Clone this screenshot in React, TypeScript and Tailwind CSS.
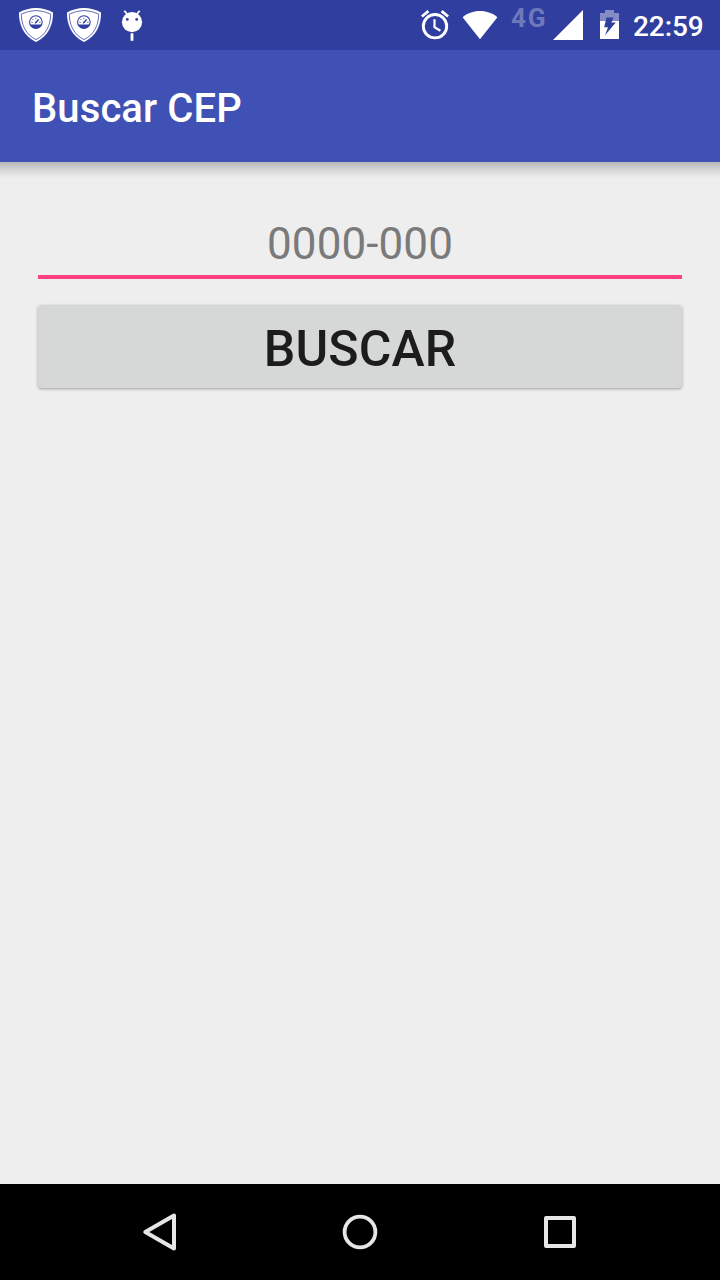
import React from "react";

function ShieldIcon() {
  return (
    <svg className="h-[50px] w-12 shrink-0" viewBox="12 0 48 50" fill="none">
      <path d="M36 8Q45 8 53 12.6C53.4 24 48.5 36.5 36 42C23.5 36.5 18.6 24 19 12.6Q27 8 36 8Z" fill="#fff" />
      <path d="M36 10.5Q44 10.6 50.7 14.2C50.6 24.5 46.5 34.6 36 39.6C25.5 34.6 21.4 24.5 21.3 14.2Q28 10.6 36 10.5Z" stroke="#4d5bb0" strokeWidth="0.9" />
      <circle cx="35.900" cy="22" r="6.300" stroke="#303F9F" strokeWidth="1.100" />
      <path d="M30 24.600H41.800C40.900 27.800 38.600 28.800 35.900 28.800S30.900 27.800 30 24.600Z" fill="#303F9F" />
      <path d="M35.200 23.200L38.600 19.600" stroke="#303F9F" strokeWidth="1.500" />
      <path d="M31.500 22.300H32.700M32.600 19.200L33.400 20M35.800 17.800V18.900M39.200 22.300H40.400" stroke="#303F9F" strokeWidth="0.900" />
    </svg>
  );
}

function BugdroidIcon() {
  return (
    <svg className="h-[50px] w-12 shrink-0" viewBox="108 0 48 50">
      <circle cx="132" cy="22.200" r="10.100" fill="#fff" />
      <path d="M124.300 10.700L127.600 14.800M139.700 10.700L136.400 14.800" stroke="#fff" strokeWidth="1.800" />
      <path d="M130.600 33.300H133.400V40.800H130.600Z" fill="#fff" />
      <circle cx="127.300" cy="19.400" r="1.400" fill="#303F9F" />
      <circle cx="136.700" cy="19.400" r="1.400" fill="#303F9F" />
    </svg>
  );
}

function AlarmIcon() {
  return (
    <svg className="h-[50px] w-10 shrink-0" viewBox="415 0 40 50" fill="none" stroke="#fff">
      <circle cx="435" cy="26.200" r="11.700" strokeWidth="2.900" />
      <path d="M421.900 16.500L428.400 11.100M448.100 16.500L441.600 11.100" strokeWidth="2.800" />
      <path d="M434.500 19.300V27.200L440.400 30.800" strokeWidth="2.200" />
    </svg>
  );
}

function WifiIcon() {
  return (
    <svg className="h-[50px] w-[50px] shrink-0" viewBox="455 0 50 50" fill="#fff">
      <path d="M480 39.200L462.600 17.200C467.300 13.300 473 11 480 11S492.700 13.300 497.400 17.200Z" />
    </svg>
  );
}

function CellAndBattery() {
  return (
    <svg className="h-[50px] w-[80px] shrink-0" viewBox="550 0 80 50">
      <path d="M583 10V40H553Z" fill="#fff" />
      <path d="M600 21V13H605V10H614V13H619V21Z" fill="#838cc5" />
      <path d="M600 21H619V39H600Z" fill="#fff" />
      <path d="M606.500 17.400H613.600L611.400 22.600H615.800L605 35.200L608 27.200H604.200Z" fill="#303F9F" />
    </svg>
  );
}

function StatusBar() {
  return (
    <header className="flex h-[50px] items-center bg-[#303F9F] pl-3 text-white">
      <ShieldIcon />
      <ShieldIcon />
      <BugdroidIcon />
      <div className="ml-auto flex h-full items-center">
        <AlarmIcon />
        <WifiIcon />
        <span className="w-[45px] shrink-0 pb-[13px] pl-[6px] text-[25px] leading-none font-bold tracking-[1.5px] text-[#6e79bb]">
          <span className="inline-block origin-left scale-x-105">4G</span>
        </span>
        <CellAndBattery />
        <span className="w-[90px] shrink-0 pt-[3px] pl-[3px] text-[28px] leading-none font-medium tracking-[-0.1px]">22:59</span>
      </div>
    </header>
  );
}

function NavigationBar() {
  return (
    <nav className="flex h-24 items-center justify-center gap-[104px] bg-black">
      <button aria-label="Voltar" className="size-24">
        <svg className="size-24" viewBox="112 1184 96 96" fill="none">
          <path d="M174 1215.500V1248.500L145.300 1232Z" stroke="#e6e6e6" strokeWidth="4" strokeLinejoin="round" />
        </svg>
      </button>
      <button aria-label="Início" className="size-24">
        <svg className="size-24" viewBox="312 1184 96 96" fill="none">
          <circle cx="360" cy="1232" r="15.400" stroke="#e6e6e6" strokeWidth="3.800" />
        </svg>
      </button>
      <button aria-label="Recentes" className="size-24">
        <svg className="size-24" viewBox="512 1184 96 96" fill="none">
          <rect x="546" y="1218" width="28" height="28" stroke="#e6e6e6" strokeWidth="4" strokeLinejoin="round" />
        </svg>
      </button>
    </nav>
  );
}

export default function App() {
  return (
    <div className="flex h-[1280px] w-[720px] flex-col overflow-hidden bg-[#eeeeee] font-[Roboto,sans-serif]">
      <StatusBar />
      <div className="flex h-28 items-center bg-[#3F51B5] pt-1.5 pl-8">
        <h1 className="text-[40px] leading-none font-medium tracking-[0.1px] text-white">Buscar CEP</h1>
      </div>
      <div className="h-4 bg-linear-to-b from-[#bcbcbc] from-10% via-[#d6d6d6] to-[#eeeeee]" />
      <main className="flex flex-1 flex-col px-[38px] pt-[38px]">
        <input
          placeholder="0000-000"
          className="h-[63px] border-b-4 border-[#FF4081] bg-transparent pt-[1px] pb-1 text-center text-[44px] leading-none tracking-[0.1px] text-[#212121] outline-none placeholder:text-[#7a7a7a] placeholder:opacity-100"
        />
        <button className="mt-[26px] flex h-[83px] items-center justify-center rounded-[4px] bg-[#d6d8d7] pt-1 text-[50px] leading-none font-medium tracking-[0.1px] text-[#1c1c1c] shadow-[0_1px_3px_rgba(0,0,0,0.35)]">
          BUSCAR
        </button>
      </main>
      <NavigationBar />
    </div>
  );
}
